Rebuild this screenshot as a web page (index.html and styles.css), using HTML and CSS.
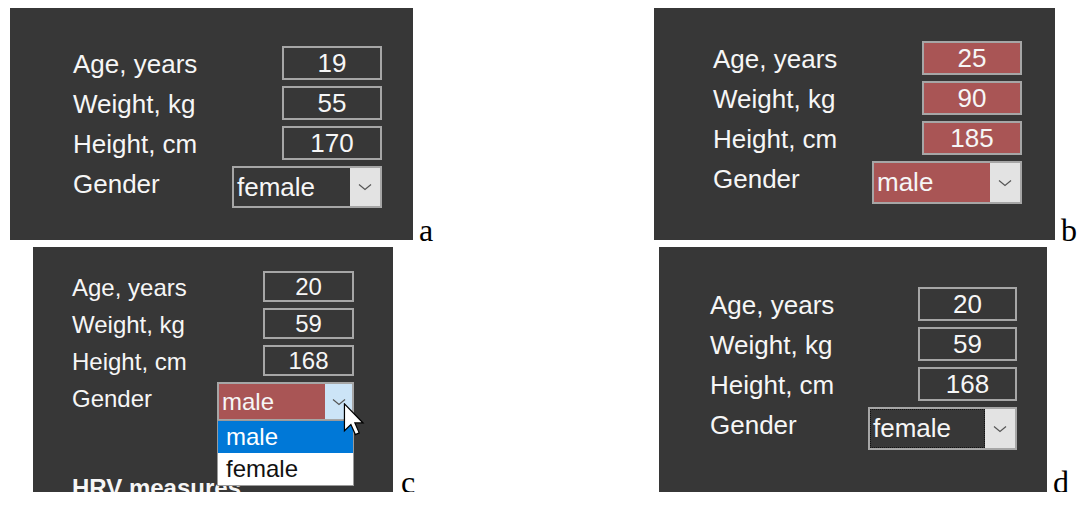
FILE: index.html
```html
<!DOCTYPE html>
<html>
<head>
<meta charset="utf-8">
<link rel="stylesheet" href="styles.css">
</head>
<body>
<div class="sheet">
  <figure class="fig fig-a">
    <div class="panel panel-a">
      <div class="form">
        <span class="lbl">Age, years</span><span class="num">19</span>
        <span class="lbl">Weight, kg</span><span class="num">55</span>
        <span class="lbl">Height, cm</span><span class="num">170</span>
        <span class="lbl">Gender</span>
        <div class="select"><span class="sel-text">female</span><span class="sel-btn"><svg width="14" height="8" viewBox="0 0 14 8"><polyline points="1,1.5 7,6.5 13,1.5" fill="none" stroke="#555" stroke-width="1.2"/></svg></span></div>
      </div>
    </div>
    <span class="tag">a</span>
  </figure>

  <figure class="fig fig-b">
    <div class="panel panel-b">
      <div class="form">
        <span class="lbl">Age, years</span><span class="num red">25</span>
        <span class="lbl">Weight, kg</span><span class="num red">90</span>
        <span class="lbl">Height, cm</span><span class="num red">185</span>
        <span class="lbl">Gender</span>
        <div class="select"><span class="sel-text red">male</span><span class="sel-btn"><svg width="14" height="8" viewBox="0 0 14 8"><polyline points="1,1.5 7,6.5 13,1.5" fill="none" stroke="#555" stroke-width="1.2"/></svg></span></div>
      </div>
    </div>
    <span class="tag">b</span>
  </figure>

  <figure class="fig fig-c">
    <div class="panel panel-c">
      <div class="form">
        <span class="lbl">Age, years</span><span class="num">20</span>
        <span class="lbl">Weight, kg</span><span class="num">59</span>
        <span class="lbl">Height, cm</span><span class="num">168</span>
        <span class="lbl">Gender</span>
        <div class="select open"><span class="sel-text red">male</span><span class="sel-btn hot"><svg width="14" height="8" viewBox="0 0 14 8"><polyline points="1,1.5 7,6.5 13,1.5" fill="none" stroke="#555" stroke-width="1.2"/></svg></span>
          <ul class="list">
            <li class="opt sel">male</li>
            <li class="opt">female</li>
          </ul>
          <svg class="cursor" width="22" height="33" viewBox="0 0 12 19"><polygon points="0.5,0.5 0.5,16 4.2,12.4 6.8,18.2 9,17.2 6.5,11.5 11.2,11.5" fill="#fff" stroke="#000" stroke-width="0.7" stroke-linejoin="miter"/></svg>
        </div>
      </div>
      <div class="hrv">HRV measures</div>
    </div>
    <span class="tag tag-c">c</span>
  </figure>

  <figure class="fig fig-d">
    <div class="panel panel-d">
      <div class="form">
        <span class="lbl">Age, years</span><span class="num">20</span>
        <span class="lbl">Weight, kg</span><span class="num">59</span>
        <span class="lbl">Height, cm</span><span class="num">168</span>
        <span class="lbl">Gender</span>
        <div class="select"><span class="sel-text focus">female</span><span class="sel-btn"><svg width="14" height="8" viewBox="0 0 14 8"><polyline points="1,1.5 7,6.5 13,1.5" fill="none" stroke="#555" stroke-width="1.2"/></svg></span></div>
      </div>
    </div>
    <span class="tag">d</span>
  </figure>
</div>
</body>
</html>
```
FILE: styles.css
```css
html, body {
  margin: 0;
  padding: 0;
  background: #ffffff;
}

.sheet {
  display: grid;
  grid-template-columns: 640px 450px;
  grid-template-rows: 232px 245px;
  row-gap: 7px;
  padding-top: 8px;
}

.fig {
  margin: 0;
  display: flex;
  align-items: flex-end;
}

.fig-a { padding-left: 10px; }
.fig-b { padding-left: 14px; }
.fig-c { padding-left: 13px; margin-left: 20px; }
.fig-d { padding-left: 19px; }

.tag {
  font-family: "Liberation Serif", "Times New Roman", serif;
  font-size: 32px;
  line-height: 20px;
  color: #000;
  margin-left: 6px;
}

.tag-c { margin-left: 8px; }

.panel {
  box-sizing: border-box;
  background: #373737;
  color: #f6f6f6;
  font-family: "Liberation Sans", Arial, sans-serif;
  overflow: hidden;
  --fs: 26px;
  --ih: 34px;
  --iw: 100px;
  --sw: 150px;
  --sh: 42px;
  --bw: 30px;
  --gap: 6px;
}

.panel-a {
  width: 403px;
  height: 232px;
  padding: 38px 31px 0 63px;
}

.panel-b {
  width: 401px;
  height: 232px;
  padding: 33px 33px 0 59px;
  --sh: 43px;
}

.panel-c {
  width: 360px;
  height: 245px;
  padding: 24px 39px 0 39px;
  --fs: 24px;
  --ih: 31px;
  --iw: 91px;
  --sw: 137px;
  --sh: 39px;
  --bw: 27px;
}

.panel-d {
  width: 388px;
  height: 245px;
  padding: 40px 30px 0 51px;
  --iw: 99px;
  --sw: 149px;
  --sh: 43px;
}

.form {
  display: grid;
  grid-template-columns: 1fr auto;
  row-gap: var(--gap);
}

.lbl {
  box-sizing: border-box;
  height: var(--ih);
  font-size: var(--fs);
  line-height: calc(var(--ih) - 2px);
  padding-top: 2px;
  align-self: start;
  white-space: nowrap;
}

.num {
  justify-self: end;
  box-sizing: border-box;
  width: var(--iw);
  height: var(--ih);
  border: 2px solid #a6a6a6;
  font-size: var(--fs);
  line-height: calc(var(--ih) - 4px);
  text-align: center;
}

.red {
  background: #a95555;
}

.select {
  justify-self: end;
  position: relative;
  box-sizing: border-box;
  width: var(--sw);
  height: var(--sh);
  border: 2px solid #a6a6a6;
  display: flex;
}

.sel-text {
  flex: 1;
  box-sizing: border-box;
  font-size: var(--fs);
  line-height: calc(var(--sh) - 4px);
  padding-left: 3px;
}

.sel-text.focus {
  outline: 1px dotted #111;
  outline-offset: -1px;
}

.sel-btn {
  width: var(--bw);
  background: #e3e3e3;
  display: flex;
  align-items: center;
  justify-content: center;
}

.sel-btn.hot {
  background: #cce4f7;
}

.list {
  position: absolute;
  left: -2px;
  right: -2px;
  top: calc(100% + 1px);
  margin: 0;
  padding: 0;
  list-style: none;
  background: #ffffff;
  border: 1px solid #9a9a9a;
  z-index: 2;
}

.opt {
  font-size: 24px;
  line-height: 32px;
  height: 32px;
  padding-left: 8px;
  color: #111;
}

.opt.sel {
  background: #0078d7;
  color: #ffffff;
}

.cursor {
  position: absolute;
  left: 124px;
  top: 19px;
  z-index: 3;
}

.hrv {
  font-weight: bold;
  font-size: 24px;
  line-height: 28px;
  margin-top: 53px;
  white-space: nowrap;
}
```
